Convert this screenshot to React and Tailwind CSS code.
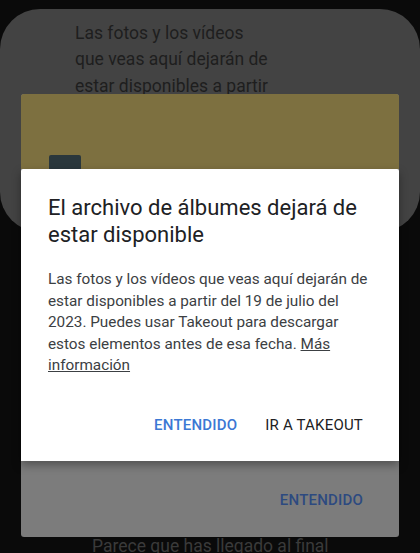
export default function App() {
  return (
    <div
      className="relative w-[420px] h-[553px] overflow-hidden bg-[#0a0a0a] flex flex-col"
      style={{ fontFamily: "Roboto, 'Noto Sans', sans-serif" }}
    >
      {/* dimmed card behind the scrim */}
      <div className="mt-[9px] h-[223px] rounded-[40px] bg-[#434343] pl-[75px] pt-[11px] text-[17.5px] leading-[26.3px] text-[#1e1e1e]">
        <p>Las fotos y los vídeos</p>
        <p>que veas aquí dejarán de</p>
        <p>estar disponibles a partir</p>
      </div>

      <p className="mt-auto pl-[92px] text-[17.5px] leading-[20px] text-[#3a3a3a] translate-y-[3px]">
        Parece que has llegado al final
      </p>

      {/* banner card underneath the dialog */}
      <div className="absolute left-[21px] top-[94px] w-[378px] h-[443px] rounded-[3px] overflow-hidden flex flex-col bg-[#7c7c7c]">
        <div className="h-[75px] bg-[#7d7040] flex items-end pl-[28px]">
          <div className="w-[32px] h-[14px] rounded-t-[2px] bg-[#2a373c]" />
        </div>
        <div className="flex-1 flex items-end justify-end pr-[36px] pb-[26px]">
          <span className="text-[15px] font-medium tracking-[0.2px] text-[#2d4a80]">
            ENTENDIDO
          </span>
        </div>
      </div>

      {/* dialog */}
      <div className="absolute left-[21px] top-[169px] w-[378px] h-[292px] bg-white rounded-t-[2px] shadow-[0_4px_10px_rgba(0,0,0,0.35)] pl-[27px] pr-[27px] pt-[25px] flex flex-col">
        <h2 className="text-[22px] leading-[27px] text-[#202124]">
          El archivo de álbumes dejará de estar disponible
        </h2>
        <p className="mt-[21px] text-[15.3px] leading-[21.6px] text-[#3c4043]">
          Las fotos y los vídeos que veas aquí dejarán de estar disponibles a
          partir del 19 de julio del 2023. Puedes usar Takeout para descargar
          estos elementos antes de esa fecha.{" "}
          <span className="underline">Más información</span>
        </p>
        <div className="mt-auto mb-[25px] flex justify-end items-center gap-[28px] pr-[9px] text-[15px] tracking-[0.2px]">
          <span className="font-medium text-[#3b78d4]">ENTENDIDO</span>
          <span className="text-[#202124]">IR A TAKEOUT</span>
        </div>
      </div>
    </div>
  );
}
